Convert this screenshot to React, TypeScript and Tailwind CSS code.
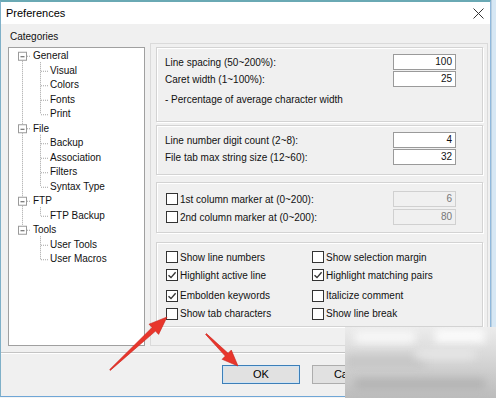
import React from "react";

const TREE: { label: string; level: 0 | 1 }[] = [
  { label: "General", level: 0 },
  { label: "Visual", level: 1 },
  { label: "Colors", level: 1 },
  { label: "Fonts", level: 1 },
  { label: "Print", level: 1 },
  { label: "File", level: 0 },
  { label: "Backup", level: 1 },
  { label: "Association", level: 1 },
  { label: "Filters", level: 1 },
  { label: "Syntax Type", level: 1 },
  { label: "FTP", level: 0 },
  { label: "FTP Backup", level: 1 },
  { label: "Tools", level: 0 },
  { label: "User Tools", level: 1 },
  { label: "User Macros", level: 1 },
];

const ROW_H = 14.5;
const rowY = (i: number) => 8.25 + ROW_H * i;

function TreeLines() {
  const parents = TREE.map((t, i) => (t.level === 0 ? i : -1)).filter((i) => i >= 0);
  const dot = { stroke: "#a3a3a3", strokeWidth: 1, strokeDasharray: "1 1", fill: "none" };
  const els: React.ReactNode[] = [];

  parents.forEach((p, k) => {
    const y = rowY(p);
    // main trunk to the next top-level node
    if (k < parents.length - 1) {
      els.push(<line key={`t${p}`} x1={13.5} y1={y + 4.5} x2={13.5} y2={rowY(parents[k + 1]) - 4.5} {...dot} />);
    }
    els.push(<line key={`s${p}`} x1={18} y1={y} x2={22} y2={y} {...dot} />);
    // children
    const end = k < parents.length - 1 ? parents[k + 1] : TREE.length;
    const last = end - 1;
    els.push(<line key={`c${p}`} x1={31.5} y1={y + 6} x2={31.5} y2={rowY(last)} {...dot} />);
    for (let c = p + 1; c < end; c++) {
      els.push(<line key={`h${c}`} x1={32} y1={rowY(c) + 0.5} x2={39} y2={rowY(c) + 0.5} {...dot} />);
    }
    // expander box
    els.push(
      <g key={`b${p}`}>
        <rect x={9.5} y={y - 4} width={8} height={8} fill="#fff" stroke="#9a9a9a" />
        <line x1={11.5} y1={y + 0.5} x2={15.5} y2={y + 0.5} stroke="#555" />
      </g>
    );
  });

  return (
    <svg className="absolute left-0 top-0 pointer-events-none" width={135} height={297}>
      {els}
    </svg>
  );
}

function Box({ checked }: { checked?: boolean }) {
  return (
    <span className="w-[12px] h-[12px] border border-[#333] bg-white flex items-center justify-center shrink-0">
      {checked && (
        <svg width="10" height="10" viewBox="0 0 10 10">
          <path d="M1.5 5.2 L4 7.6 L8.6 2.2" stroke="#333" strokeWidth="1.4" fill="none" />
        </svg>
      )}
    </span>
  );
}

function Field({ value, disabled }: { value: string; disabled?: boolean }) {
  return (
    <span
      className={
        disabled
          ? "w-[63px] h-[16px] border border-[#d0d0d0] bg-[#f0f0f0] text-right pr-[3px] leading-[14px] text-[#777]"
          : "w-[63px] h-[16px] border border-[#9a9a9a] bg-white text-right pr-[3px] leading-[14px] text-[#111]"
      }
    >
      {value}
    </span>
  );
}

function Group({ className, children }: { className: string; children: React.ReactNode }) {
  return (
    <div className={`w-[327px] border border-[#d3d3d3] shadow-[inset_1px_1px_0_#fff,1px_1px_0_#fff] ${className}`}>
      {children}
    </div>
  );
}

function Arrows() {
  return (
    <svg className="absolute left-0 top-0 pointer-events-none" width={496} height={398}>
      <polygon
        points="110.3,370.4 155.5,331.1 158.6,334.4 167,317 149,324.2 152.1,327.5 109.7,369.6"
        fill="#e8362c"
        stroke="#c9221b"
        strokeWidth="0.6"
      />
      <polygon
        points="205.6,334.4 225.3,356.1 222.1,359.3 238,366 231.3,350.1 228.1,353.3 206.4,333.6"
        fill="#e8362c"
        stroke="#c9221b"
        strokeWidth="0.6"
      />
    </svg>
  );
}

export default function App() {
  return (
    <div className="relative w-[496px] h-[398px] overflow-hidden bg-[#f4f4f4] font-['Liberation_Sans',Arial,sans-serif] text-[10px] text-[#111]">
      <div className="flex">
        {/* dialog */}
        <div className="w-[491px] h-[397px] flex flex-col border-l border-r border-b border-t-2 border-l-[#7fb0c8] border-r-[#8fb8dc] border-b-[#6fa6d6] border-t-[#6aa9b4] bg-[#f0f0f0]">
          <div className="h-[22px] bg-white flex items-center justify-between pl-[5px] pr-[6px]">
            <span className="text-[11px] text-black">Preferences</span>
            <svg width="11" height="11" viewBox="0 0 11 11">
              <path d="M0.5 0.5 L10.5 10.5 M10.5 0.5 L0.5 10.5" stroke="#333" strokeWidth="1" />
            </svg>
          </div>

          <div className="flex pl-[7px] pt-[6px]">
            {/* categories */}
            <div className="w-[137px] flex flex-col">
              <span className="h-[14px] leading-[14px] pl-[2px]">Categories</span>
              <div className="relative mt-[3px] h-[299px] border border-[#a0a0a0] bg-white">
                <TreeLines />
                <div className="pt-[1px]">
                  {TREE.map((t) => (
                    <div
                      key={t.label}
                      className={
                        t.level === 0
                          ? "h-[14.5px] leading-[14.5px] pl-[24px]"
                          : "h-[14.5px] leading-[14.5px] pl-[41px]"
                      }
                    >
                      {t.label}
                    </div>
                  ))}
                </div>
              </div>
            </div>

            {/* options */}
            <div className="ml-[5px] mt-[13px] w-[338px] h-[303px] border border-[#dadada] pl-[5px] pt-[3px] flex flex-col">
              <Group className="h-[75px] pl-[8px] pr-[26px] pt-[6px] flex flex-col gap-[1px]">
                <div className="h-[16px] flex items-center justify-between">
                  <span>Line spacing (50~200%):</span>
                  <Field value="100" />
                </div>
                <div className="h-[16px] flex items-center justify-between">
                  <span>Caret width (1~100%):</span>
                  <Field value="25" />
                </div>
                <div className="h-[16px] mt-[3px] flex items-center">- Percentage of average character width</div>
              </Group>

              <Group className="mt-[3px] h-[50px] pl-[8px] pr-[26px] pt-[6px] flex flex-col gap-[1px]">
                <div className="h-[16px] flex items-center justify-between">
                  <span>Line number digit count (2~8):</span>
                  <Field value="4" />
                </div>
                <div className="h-[16px] flex items-center justify-between">
                  <span>File tab max string size (12~60):</span>
                  <Field value="32" />
                </div>
              </Group>

              <Group className="mt-[7px] h-[51px] pl-[9px] pr-[26px] pt-[8px] flex flex-col gap-[2px]">
                <div className="h-[16px] flex items-center justify-between">
                  <span className="flex items-center gap-[2px]">
                    <Box />
                    1st column marker at (0~200):
                  </span>
                  <Field value="6" disabled />
                </div>
                <div className="h-[16px] flex items-center justify-between">
                  <span className="flex items-center gap-[2px]">
                    <Box />
                    2nd column marker at (0~200):
                  </span>
                  <Field value="80" disabled />
                </div>
              </Group>

              <Group className="mt-[9px] h-[85px] pl-[9px] pt-[5px] grid grid-cols-[146px_1fr] auto-rows-[18px]">
                <span className="flex items-center gap-[2px]">
                  <Box />
                  Show line numbers
                </span>
                <span className="flex items-center gap-[2px]">
                  <Box />
                  Show selection margin
                </span>
                <span className="flex items-center gap-[2px]">
                  <Box checked />
                  Highlight active line
                </span>
                <span className="flex items-center gap-[2px]">
                  <Box checked />
                  Highlight matching pairs
                </span>
                <span className="mt-[5px] flex items-center gap-[2px]">
                  <Box checked />
                  Embolden keywords
                </span>
                <span className="mt-[5px] flex items-center gap-[2px]">
                  <Box />
                  Italicize comment
                </span>
                <span className="mt-[5px] flex items-center gap-[2px]">
                  <Box />
                  Show tab characters
                </span>
                <span className="mt-[5px] flex items-center gap-[2px]">
                  <Box />
                  Show line break
                </span>
              </Group>
            </div>
          </div>

          <div className="mt-[6px] h-[2px] border-t border-b border-t-[#c4c4c4] border-b-white" />

          <div className="mt-[11px] pl-[221px] flex gap-[12px]">
            <button className="w-[78px] h-[19px] border border-[#3d7fb8] bg-[#e1e1e1] shadow-[inset_0_0_0_1px_#cfe3f3] text-[11px] leading-[17px] text-black">
              OK
            </button>
            <button className="w-[78px] h-[19px] border border-[#adadad] bg-[#e1e1e1] text-[11px] leading-[17px] text-black">
              Cancel
            </button>
          </div>
        </div>

        {/* window behind */}
        <div className="w-[5px] h-[398px] bg-[#d6e7f4] border-l border-[#b9cfe0]" />
      </div>

      {/* watermark blur */}
      <div className="absolute left-[345px] top-[327px] w-[151px] h-[71px] overflow-hidden bg-linear-to-b from-[#ececec] via-[#d4d4d4] to-[#bcbcbc]">
        <div className="absolute left-[10px] top-[4px] w-[60px] h-[12px] bg-[#f8f8f8] blur-[4px]" />
        <div className="absolute left-[90px] top-[2px] w-[50px] h-[14px] bg-[#fbfbfb] blur-[4px]" />
        <div className="absolute left-[0px] top-[28px] w-[80px] h-[14px] bg-[#c6c6c6] blur-[5px]" />
        <div className="absolute left-[70px] top-[22px] w-[60px] h-[10px] bg-[#e6e6e6] blur-[4px]" />
        <div className="absolute left-[10px] top-[52px] w-[130px] h-[10px] bg-[#b2b2b2] blur-[4px]" />
      </div>

      <Arrows />
    </div>
  );
}
